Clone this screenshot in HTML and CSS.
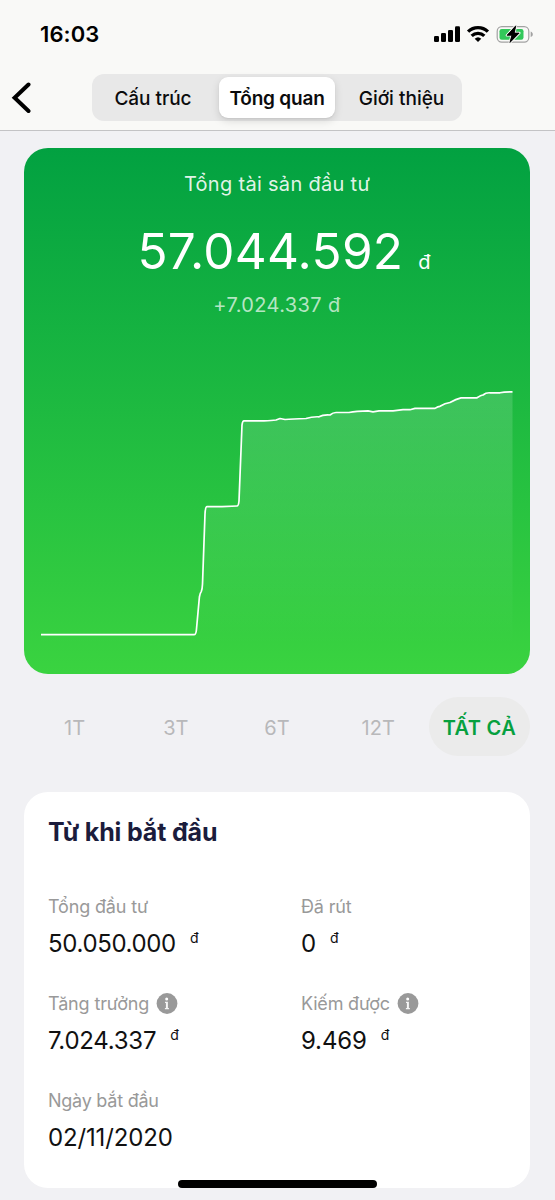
FILE: index.html
```
<!DOCTYPE html>
<html lang="vi">
<head>
<meta charset="utf-8">
<meta name="viewport" content="width=device-width, initial-scale=1">
<title>Tổng quan</title>
<link rel="stylesheet" href="styles.css">
</head>
<body>
<div class="screen">
  <header class="header">
    <div class="status">
      <span class="time">16:03</span>
      <svg class="status-icons" width="100" height="18" viewBox="0 0 100 18">
        <g fill="#000">
          <rect x="0" y="11" width="5" height="6" rx="1.3"/>
          <rect x="7" y="8" width="5" height="9" rx="1.3"/>
          <rect x="14" y="5" width="5" height="12" rx="1.3"/>
          <rect x="21" y="1.3" width="5" height="15.7" rx="1.3"/>
        </g>
        <g fill="none" stroke="#000" stroke-width="3.3">
          <path d="M34.1 6.6a14.2 14.2 0 0 1 19.8 0"/>
          <path d="M37.7 10.9a9 9 0 0 1 12.6 0"/>
        </g>
        <path d="M44 17l-3.3-3.2a4.900 4.900 0 0 1 6.6 0z" fill="#000"/>
        <rect x="63.2" y="1.7" width="31.6" height="15.4" rx="4.6" fill="none" stroke="#a2a2a2" stroke-width="1.2"/>
        <path d="M96.7 6.5c2.8 1 2.8 4.6 0 5.6z" fill="#a2a2a2"/>
        <rect x="65.500" y="4" width="24" height="10.8" rx="2.2" fill="#32c85a"/>
        <path d="M81.8 .8L73 10.300h4.800l-1.900 7.200 9.300-9.500h-4.900z" fill="#000" stroke="#f9f9f7" stroke-width="2.600" stroke-linejoin="round" paint-order="stroke"/>
        <path d="M81.8 .8L73 10.300h4.800l-1.900 7.200 9.300-9.500h-4.900z" fill="#000" stroke="#000" stroke-width=".7" stroke-linejoin="round"/>
      </svg>
    </div>
    <div class="nav">
      <svg class="back" width="20" height="32" viewBox="0 0 20 32"><path d="M17.500 2.500L3.600 15.800 17.500 29" fill="none" stroke="#000" stroke-width="4" stroke-linecap="round" stroke-linejoin="miter"/></svg>
      <div class="segments">
        <span class="segment first"><b>Cấu trúc</b></span>
        <span class="segment active"><b>Tổng quan</b></span>
        <span class="segment last"><b>Giới thiệu</b></span>
      </div>
    </div>
  </header>
  <main class="main">
    <section class="asset">
      <div class="asset-title">Tổng tài sản đầu tư</div>
      <div class="asset-value"><span class="amount">57.044.592</span><span class="unit">đ</span></div>
      <div class="asset-change">+7.024.337 đ</div>
      <svg class="chart" width="506" height="265" viewBox="24 380 506 265">
        <defs><linearGradient id="area" x1="0" y1="392" x2="0" y2="645" gradientUnits="userSpaceOnUse"><stop offset="0" stop-color="#fff" stop-opacity=".15"/><stop offset="1" stop-color="#fff" stop-opacity="0"/></linearGradient></defs>
        <path fill="url(#area)" d="M41 634.7H194Q196 634.7 196.4 630L199.4 597Q200 593 201.3 591.5Q202.3 589 202.5 584L205 514Q205.400 506.700 207 506.700H222L237 506Q238.500 506 239 501L242 425Q242.500 420.800 244 420.800H264Q272 420.500 276 420L280 418.500L285 419.500Q292 418.700 306 418.500Q312 416.500 319 416.800Q323 414.500 330 415Q333 412.500 336 412.500H349Q356 410.800 368 410.800L373 411.800L379 410.800H393L403 409.700H410L415 408.400H435Q438 406.300 440 406.300Q445 403 450 402.500Q456 399 461 397.800H477Q481 395 483 395Q486 392.500 490 392.800H500Q504 391.800 512.500 391.800V645H41Z"/>
        <path fill="none" stroke="#fff" stroke-width="1.7" stroke-linejoin="round" d="M41 634.7H194Q196 634.7 196.4 630L199.4 597Q200 593 201.3 591.5Q202.3 589 202.5 584L205 514Q205.400 506.700 207 506.700H222L237 506Q238.500 506 239 501L242 425Q242.500 420.800 244 420.800H264Q272 420.500 276 420L280 418.500L285 419.500Q292 418.700 306 418.500Q312 416.500 319 416.800Q323 414.500 330 415Q333 412.500 336 412.500H349Q356 410.800 368 410.800L373 411.800L379 410.800H393L403 409.700H410L415 408.400H435Q438 406.300 440 406.300Q445 403 450 402.500Q456 399 461 397.800H477Q481 395 483 395Q486 392.500 490 392.800H500Q504 391.800 512.500 391.800"/>
      </svg>
    </section>
    <nav class="periods">
      <span>1T</span><span>3T</span><span>6T</span><span>12T</span><span class="selected">TẤT CẢ</span>
    </nav>
    <section class="summary">
      <h2>Từ khi bắt đầu</h2>
      <div class="stats">
        <div class="stat"><div class="label">Tổng đầu tư</div><div class="value total">50.050.000<sup>đ</sup></div></div>
        <div class="stat"><div class="label">Đã rút</div><div class="value">0<sup>đ</sup></div></div>
        <div class="stat"><div class="label">Tăng trưởng<svg class="info" width="22" height="22" viewBox="0 0 22 22"><circle cx="11" cy="10.500" r="10.400" fill="#999"/><circle cx="10.700" cy="6" r="1.500" fill="#fff"/><path d="M9 8.700h2.900v6.300h1v1.200H8.900V15h1V9.900H9z" fill="#fff" fill-opacity=".9"/></svg></div><div class="value">7.024.337<sup>đ</sup></div></div>
        <div class="stat"><div class="label earned">Kiếm được<svg class="info" width="22" height="22" viewBox="0 0 22 22"><circle cx="11" cy="10.500" r="10.400" fill="#999"/><circle cx="10.700" cy="6" r="1.500" fill="#fff"/><path d="M9 8.700h2.900v6.300h1v1.200H8.900V15h1V9.900H9z" fill="#fff" fill-opacity=".9"/></svg></div><div class="value earned-value">9.469<sup>đ</sup></div></div>
        <div class="stat"><div class="label date-label">Ngày bắt đầu</div><div class="value date-value">02/11/2020</div></div>
      </div>
    </section>
  </main>
  <div class="home-indicator"></div>
</div>
</body>
</html>
```
FILE: styles.css
```
* { box-sizing: border-box; }
body { margin: 0; background: #f1f1f4; font-family: Inter, "Liberation Sans", sans-serif; color: #0b0b0d; }
.screen { position: relative; width: 555px; height: 1200px; overflow: hidden; }
.header { height: 131px; background: #f9f9f7; border-bottom: 1px solid #c3c3c5; }
.status { height: 74px; display: flex; justify-content: space-between; padding: 20px 21px 0 40px; }
.time { font-size: 22px; font-weight: 600; line-height: 29px; letter-spacing: .1px; color: #000; }
.status-icons { margin-top: 5px; }
.nav { display: flex; align-items: center; height: 47px; padding-left: 11px; }
.back { margin-right: 61px; margin-top: 1px; }
.segments { display: grid; grid-template-columns: 123px 117px 124px; width: 370px; height: 47px; padding: 3px; border-radius: 12px; background: #e8e8e8; }
.segment { display: flex; align-items: center; justify-content: center; padding-top: 1px; font-size: 19px; white-space: nowrap; }
.segment b { font-weight: 450; }
.first { padding-right: 7px; letter-spacing: -.05px; }
.last { padding-left: 9px; }
.active { background: #fff; border-radius: 9px; box-shadow: 0 3px 9px rgba(0,0,0,.13), 0 1px 2px rgba(0,0,0,.06); margin-left: 1px; letter-spacing: -.2px; }
.active b { font-weight: 580; }
.main { padding: 17px 25px 0 24px; }
.asset { height: 526px; border-radius: 24px; background: linear-gradient(#02a141, #3ad340); color: #fff; text-align: center; padding-top: 22px; overflow: hidden; }
.asset-title { font-size: 20px; line-height: 28px; letter-spacing: .3px; color: rgba(255,255,255,.9); }
.asset-value { display: flex; align-items: baseline; justify-content: center; height: 66px; line-height: 66px; margin-top: 20px; padding-left: 14px; }
.amount { font-size: 49.500px; font-weight: 400; letter-spacing: .3px; }
.unit { font-size: 20px; margin-left: 15px; }
.asset-change { font-size: 20px; line-height: 28px; margin-top: 7px; letter-spacing: .4px; color: rgba(255,255,255,.7); }
.chart { display: block; margin-top: 61px; }
.periods { display: grid; grid-template-columns: repeat(5, 1fr); margin-top: 23px; height: 59px; }
.periods span { display: flex; align-items: center; justify-content: center; padding-top: 2px; font-size: 20px; color: #b8b8ba; }
.periods .selected { background: #ebebeb; border-radius: 30px; color: #06a03f; font-weight: 600; letter-spacing: .35px; white-space: nowrap; }
.summary { height: 396px; margin-top: 36px; padding: 24px; background: #fff; border-radius: 24px; }
.summary h2 { margin: 0; font-size: 25px; line-height: 32px; font-weight: 650; color: #1b1c3c; letter-spacing: -.15px; }
.stats { display: grid; grid-template-columns: 253px 1fr; grid-auto-rows: 97px; margin-top: 46px; padding-top: 1px; }
.label { display: flex; align-items: center; height: 24px; font-size: 18px; line-height: 24px; letter-spacing: -.15px; color: #999; white-space: nowrap; }
.earned { letter-spacing: -.2px; }
.date-label { letter-spacing: -.25px; }
.info { margin-left: 7px; }
.value { font-size: 24px; line-height: 32px; margin-top: 9px; letter-spacing: -.25px; white-space: nowrap; color: #111; }
.total { letter-spacing: -.35px; }
.earned-value { letter-spacing: -.15px; }
.date-value { letter-spacing: -.15px; }
.value sup { display: inline-block; font-size: 14px; line-height: 20px; vertical-align: 9px; margin-left: 14px; }
.home-indicator { position: absolute; left: 178px; top: 1180px; width: 199px; height: 8px; border-radius: 4px; background: #000; }
```
